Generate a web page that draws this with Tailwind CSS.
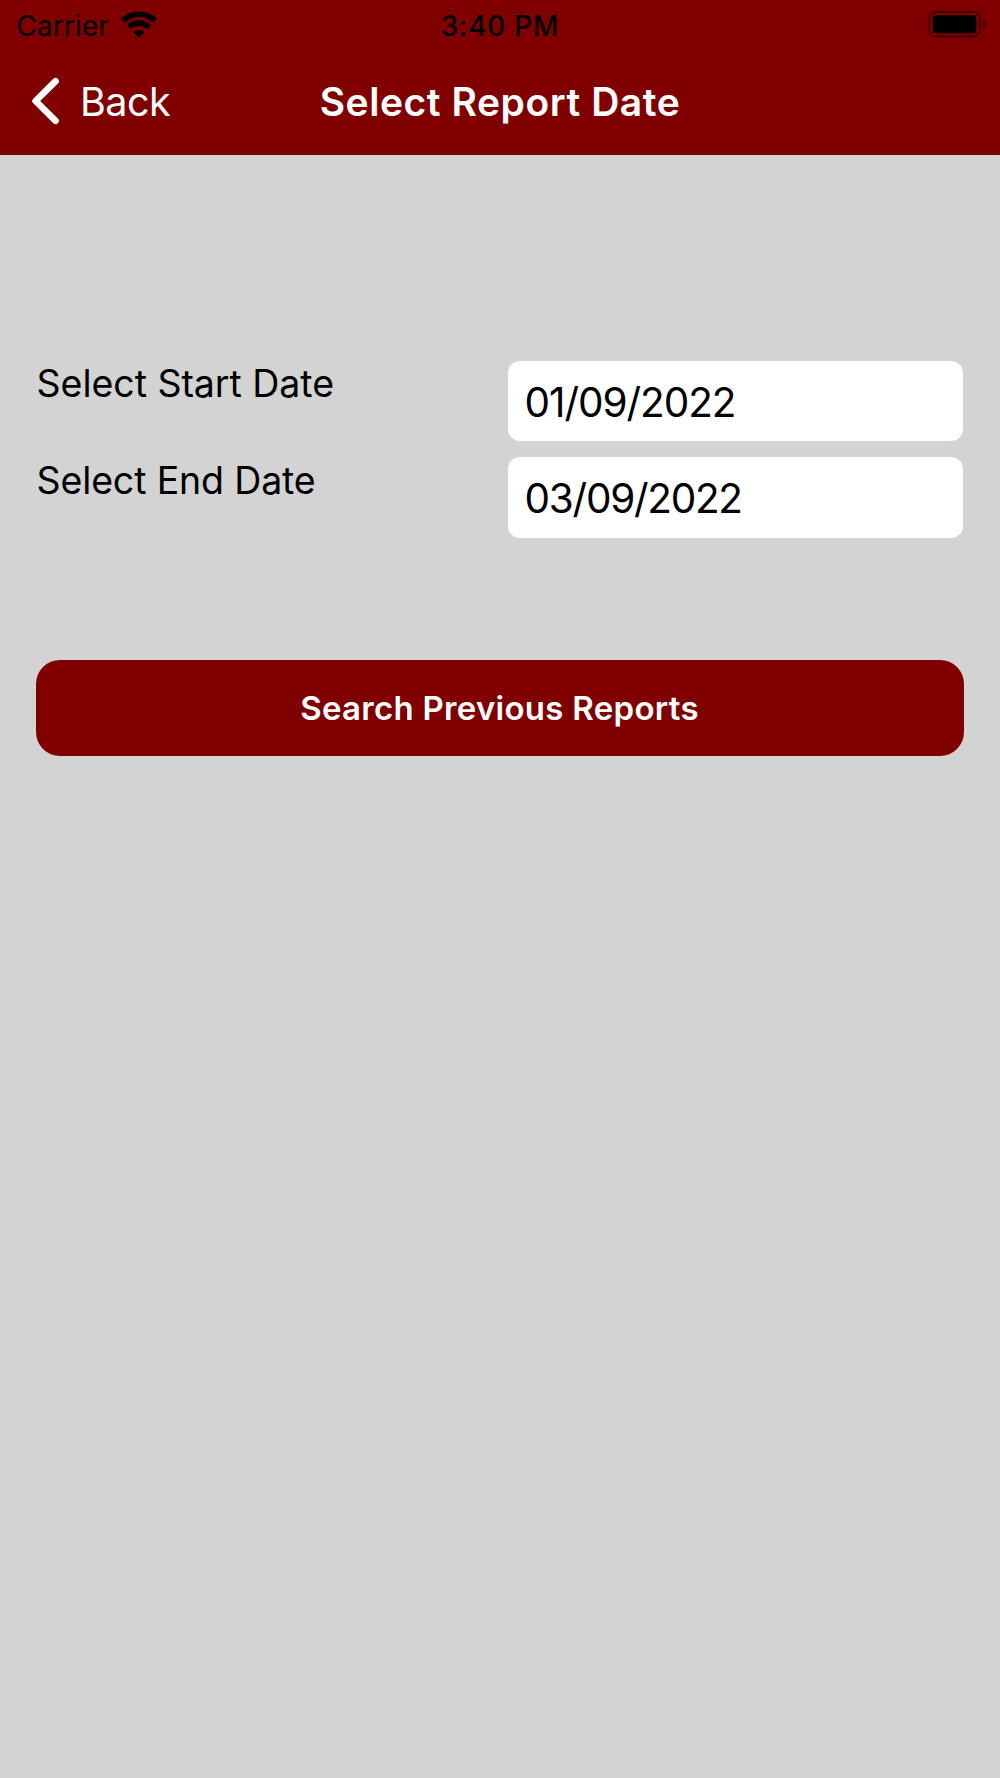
<!DOCTYPE html>
<html lang="en">
<head>
  <meta charset="UTF-8" />
  <meta name="viewport" content="width=device-width, initial-scale=1" />
  <title>Select Report Date</title>
  <script src="https://cdn.jsdelivr.net/npm/@tailwindcss/browser@4"></script>
</head>

<body class="bg-[#d3d3d3] font-['Inter','Liberation_Sans',sans-serif] text-black h-screen overflow-hidden">
  <!-- Header -->
  <header class="bg-[#800000] h-[154.7px]">
    <!-- status bar -->
    <div class="h-[51px] grid grid-cols-3 items-center pl-[16.5px] pr-[12.5px]">
      <div class="flex items-center">
        <span class="text-[28px] leading-[51px] pt-px tracking-[0.12px]">Carrier</span>
        <svg class="w-[38px] h-[28px] ml-[10.6px] -mt-[4px]" viewBox="0 0 38 28" fill="none" stroke="black" stroke-width="5.6">
          <path d="M2.8 10.8C12 2 26 2 35.2 10.8" />
          <path d="M8.9 17.2C14.8 11.8 23.2 11.8 29.1 17.2" />
          <path d="M19 27.6L13.4 22C16.6 19.2 21.4 19.2 24.6 22Z" fill="black" stroke="none" />
        </svg>
      </div>
      <span class="text-[28px] leading-[51px] pt-px font-medium tracking-[0.75px] text-center pr-[4px] whitespace-nowrap">3:40 PM</span>
      <svg class="w-[60px] h-[28px] justify-self-end -mt-[4px]" viewBox="0 0 60 28">
        <rect x="2" y="2" width="51" height="24.5" rx="7" fill="none" stroke="black" stroke-opacity="0.4" stroke-width="2.4" />
        <rect x="5.7" y="5.2" width="43.6" height="18" rx="3.5" fill="black" />
        <path d="M56.2 9.2C60.4 11 60.4 17.6 56.2 19.4Z" fill="black" fill-opacity="0.5" />
      </svg>
    </div>

    <!-- nav bar -->
    <div class="h-[101.5px] grid grid-cols-[300px_1fr_300px] items-center text-white">
      <a href="#" class="flex items-center pl-[31px]">
        <svg class="w-[30px] h-[48px] -mt-[1px]" viewBox="0 0 30 48" fill="none" stroke="white" stroke-width="6.6" stroke-linecap="round" stroke-linejoin="round">
          <path d="M24.6 4.2L4.6 24L24.6 43.8" />
        </svg>
        <span class="ml-[19px] pt-[2px] text-[39.5px] leading-none tracking-[-0.5px]">Back</span>
      </a>
      <h1 class="text-[39px] leading-none font-semibold tracking-[0.54px] text-center whitespace-nowrap">Select Report Date</h1>
    </div>
  </header>

  <!-- Form -->
  <main class="px-9 pt-[206.3px]">
    <div class="flex flex-col gap-4 pr-[1.3px]">
      <div class="flex justify-between items-start h-[80.4px]">
        <label for="startDate" class="pl-[0.6px] text-[37.5px] leading-[46px] tracking-[-0.04px]">Select Start Date</label>
        <input id="startDate" type="text" value="01/09/2022"
               class="w-[454.7px] h-full bg-white rounded-xl px-[16.6px] pt-[2px] text-[40.5px] tracking-[-1.07px] outline-none" />
      </div>
      <div class="flex justify-between items-start h-[80.4px]">
        <label for="endDate" class="pl-[0.6px] text-[37.5px] leading-[47px] tracking-[-0.15px]">Select End Date</label>
        <input id="endDate" type="text" value="03/09/2022"
               class="w-[454.7px] h-full bg-white rounded-xl px-[16.6px] pt-[2px] text-[40.5px] tracking-[-1.29px] outline-none" />
      </div>
    </div>

    <button class="block w-full h-[96.4px] mt-[121.8px] pt-[2px] pr-[1px] bg-[#800000] rounded-3xl text-white text-[33px] font-semibold tracking-[0.28px]">
      Search Previous Reports
    </button>
  </main>
</body>
</html>
